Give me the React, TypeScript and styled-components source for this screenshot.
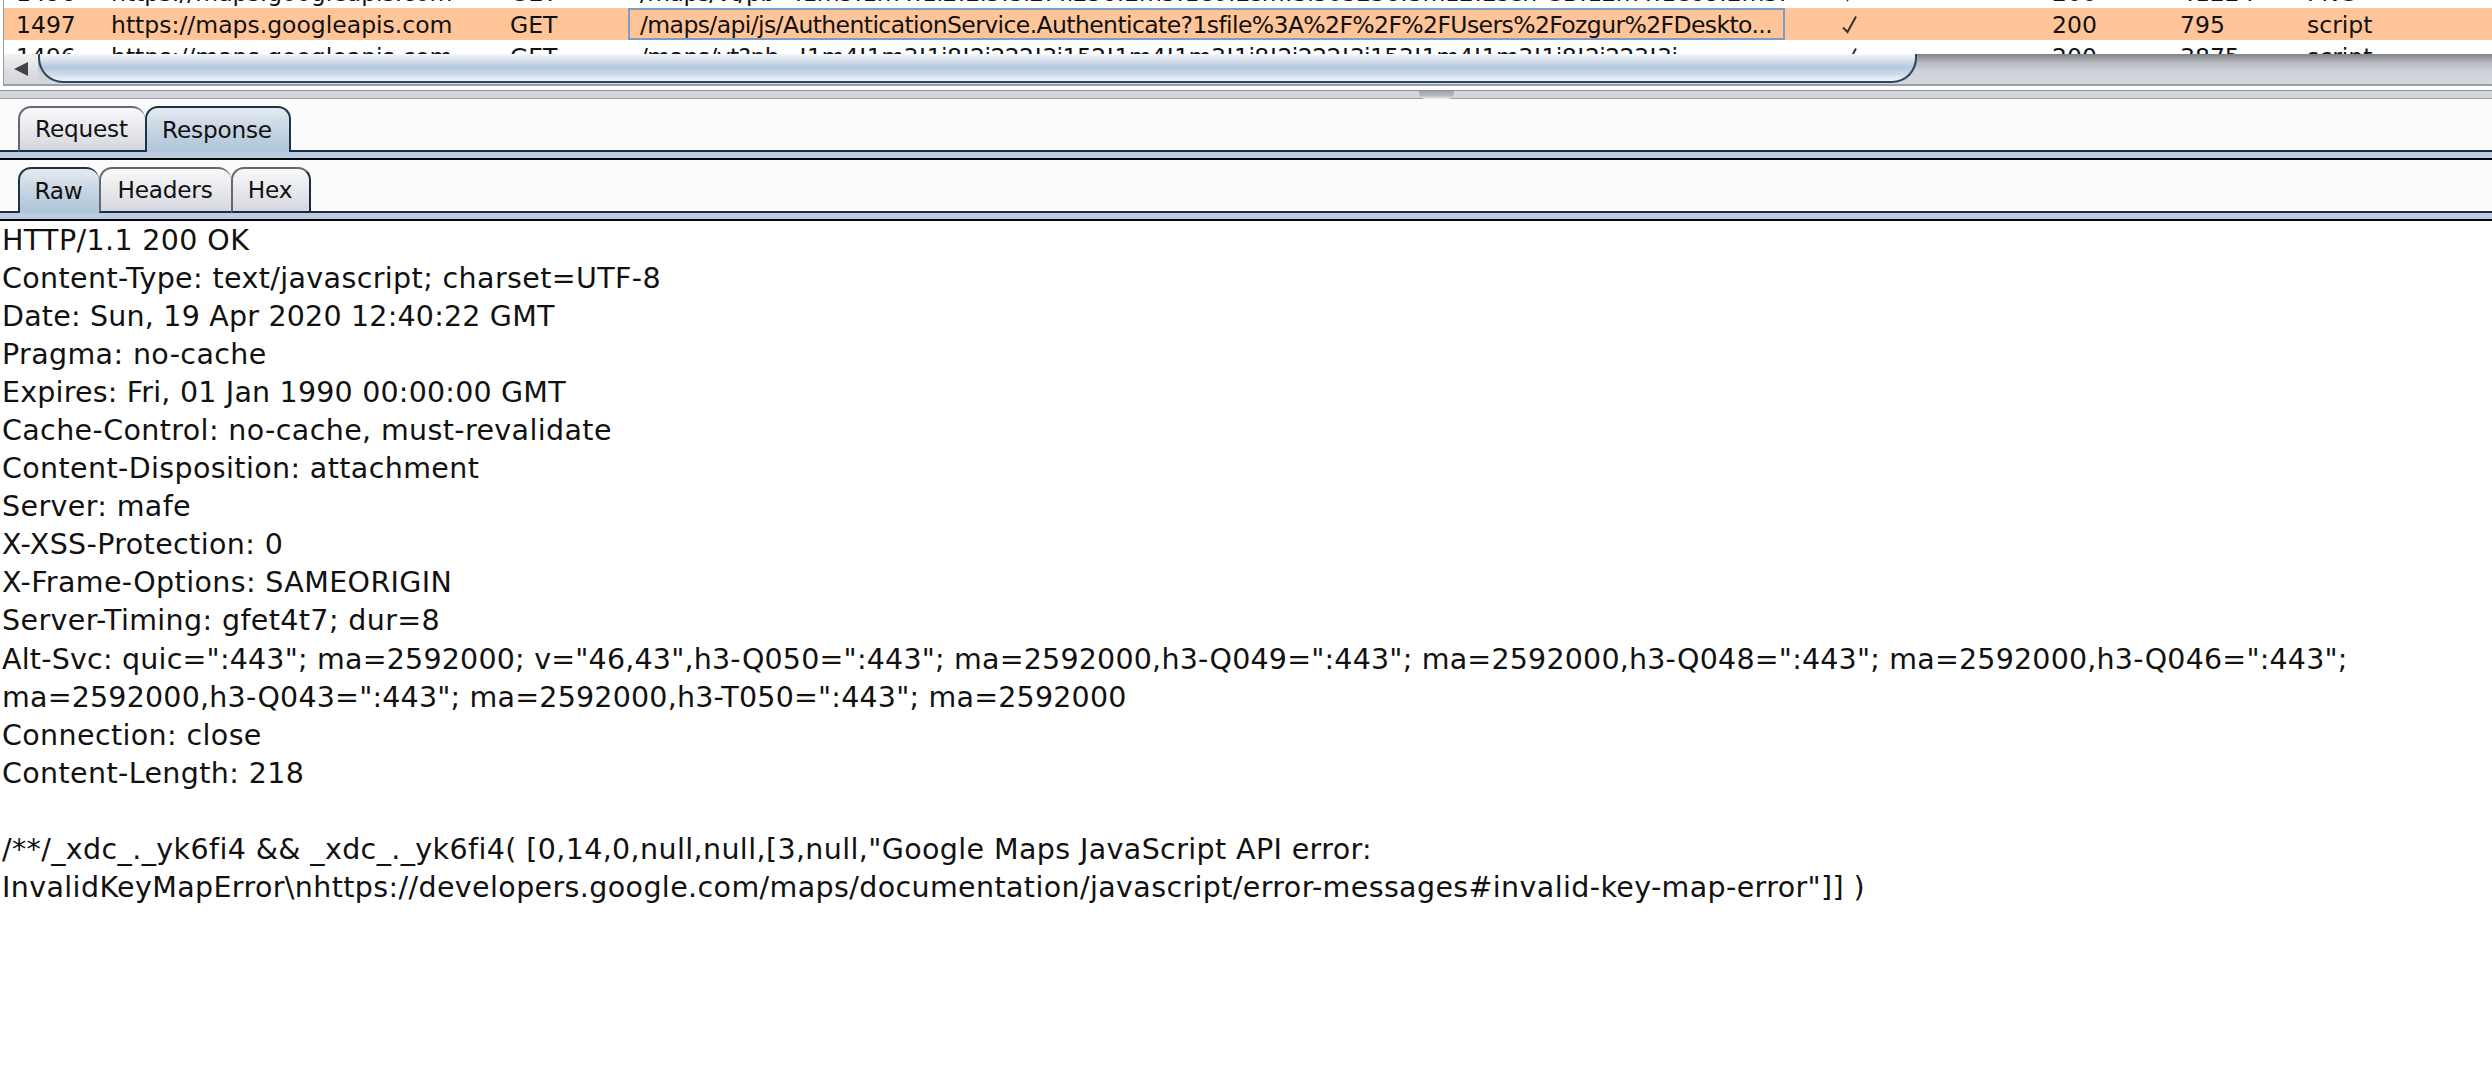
import React from 'react';
import styled, { createGlobalStyle } from 'styled-components';

const GlobalStyle = createGlobalStyle`
  html, body {
    margin: 0;
    padding: 0;
    background: #fff;
    overflow: hidden;
  }
  body {
    font-family: "DejaVu Sans", "Liberation Sans", sans-serif;
    color: #000;
  }
`;

const Page = styled.div`
  width: 2492px;
  height: 1086px;
  display: flex;
  flex-direction: column;
  overflow: hidden;
`;

const TablePanel = styled.div`
  margin-left: 3px;
  height: 84px;
  border-left: 1px solid #9a9ea8;
  border-bottom: 2px solid #9a9ea8;
  background: #fff;
  flex: none;
`;

const TableViewport = styled.div`
  height: 54px;
  overflow: hidden;
`;

const Rows = styled.div`
  margin-top: -24px;
`;

const Row = styled.div<{ $selected?: boolean }>`
  display: grid;
  grid-template-columns: 95px 399px 130px 1157px 255px 128px 127px 1fr;
  height: 32px;
  background: ${(p) => (p.$selected ? '#ffc599' : '#fff')};
  font-size: 23.5px;
  line-height: 35px;
`;

const Cell = styled.div`
  padding-left: 12px;
  white-space: nowrap;
  overflow: hidden;
  color: #111;
`;

const PathCell = styled(Cell)<{ $focused?: boolean }>`
  letter-spacing: -0.6px;
  ${(p) => p.$focused && 'box-shadow: inset 0 0 0 2px #7c9ec6;'}
`;

const CheckCell = styled.div`
  padding-left: 57px;
  display: flex;
  align-items: center;
`;

const ScrollBar = styled.div`
  height: 30px;
  display: flex;
  background: linear-gradient(#7f8288 0, #b9bbc1 30%, #d0d2d9 60%, #d5d7de 100%);
`;

const ArrowButton = styled.div`
  width: 34px;
  flex: none;
  display: flex;
  align-items: center;
  padding-left: 10px;
  box-sizing: border-box;
  background: linear-gradient(#f2f2f4 0, #dcdde2 60%, #d3d5dc 100%);
`;

const ArrowLeft = styled.div`
  width: 0;
  height: 0;
  border-top: 7px solid transparent;
  border-bottom: 7px solid transparent;
  border-right: 14px solid #444;
`;

const Thumb = styled.div`
  width: 1879px;
  height: 29px;
  box-sizing: border-box;
  flex: none;
  border: 2px solid #2c4557;
  border-top: none;
  border-radius: 0 0 25px 25px;
  background: linear-gradient(#f6f8fa 0, #dde5ee 18%, #b4c8de 50%, #cddcea 75%, #eef7fc 100%);
`;

const Gap = styled.div`
  height: 4px;
  flex: none;
`;

const Splitter = styled.div`
  height: 7px;
  flex: none;
  display: flex;
  background: #d5d7de;
  border-top: 1px solid #8e8f97;
  border-bottom: 1px solid #9c9da5;
`;

const Grip = styled.div`
  width: 35px;
  height: 8px;
  margin-left: 1419px;
  box-sizing: border-box;
  border-radius: 0 0 6px 6px;
  background: linear-gradient(#9fa3ad 0, #b7bac3 60%, #f4f4f6 100%);
`;

const TabStrip = styled.div`
  height: 51px;
  flex: none;
  display: flex;
  align-items: flex-end;
  padding-left: 18px;
  background: #fbfbfb;
  border-bottom: 2px solid #1b2b44;
`;

const Tab = styled.div<{ $active?: boolean; $w: number }>`
  width: ${(p) => p.$w}px;
  height: 46px;
  margin-bottom: -2px;
  padding: 0 2px 2px 0;
  box-sizing: border-box;
  flex: none;
  display: flex;
  align-items: center;
  justify-content: center;
  font-size: 23.2px;
  letter-spacing: -0.2px;
  color: #111;
  border-radius: 13px 13px 0 0;
  border: 2px solid ${(p) => (p.$active ? '#1f3347' : '#66686e')};
  border-right-width: 0;
  border-bottom: ${(p) => (p.$active ? 'none' : '2px solid #1b2b44')};
  background: ${(p) =>
    p.$active
      ? 'linear-gradient(#e6ebf1 0, #c9d6e4 45%, #adc4da 100%)'
      : 'linear-gradient(#f8f8fa 0, #e8e9ed 50%, #d5d7de 100%)'};
  &:last-child {
    border-right-width: 2px;
    border-right-color: ${(p) => (p.$active ? '#1f3347' : '#1b2b44')};
  }
`;

const Band = styled.div`
  height: 6px;
  flex: none;
  background: #bccde1;
  border-bottom: 2px solid #05070f;
`;

const MessageBody = styled.div`
  padding: 1px 0 0 2px;
  font-size: 28.5px;
  color: #111;
`;

// the digit heavy header lines need less tracking than the rest
const Line = styled.div<{ $tight?: boolean }>`
  height: 38.05px;
  line-height: 38.05px;
  white-space: pre;
  letter-spacing: ${(p) => (p.$tight ? '0.2px' : '0.38px')};
`;

const Check = () => (
  <svg width="16" height="19" viewBox="0 0 16 19" fill="none">
    <path d="M1 12.5 L5.5 17 L14 1.5" stroke="#333" strokeWidth="2" />
  </svg>
);

type LogRow = {
  id: string;
  host: string;
  path: string;
  status: string;
  length: string;
  type: string;
  selected?: boolean;
};

const rows: LogRow[] = [
  {
    id: '1496',
    host: 'https://maps.googleapis.com',
    path: '/maps/vt/pb=!1m5!1m4!1i2!2i3!3i2!4i256!2m3!1e0!2sm!3i505236!3m12!2sen-GB!12m4!1e68!2m3!1e0-csm...',
    status: '200',
    length: '41224',
    type: 'PNG',
  },
  {
    id: '1497',
    host: 'https://maps.googleapis.com',
    path: '/maps/api/js/AuthenticationService.Authenticate?1sfile%3A%2F%2F%2FUsers%2Fozgur%2FDeskto...',
    status: '200',
    length: '795',
    type: 'script',
    selected: true,
  },
  {
    id: '1496',
    host: 'https://maps.googleapis.com',
    path: '/maps/vt?pb=!1m4!1m3!1i8!2i222!3i152!1m4!1m3!1i8!2i222!3i153!1m4!1m3!1i8!2i223!3i',
    status: '200',
    length: '3875',
    type: 'script',
  },
];

const responseLines: { text: string; tight?: boolean }[] = [
  { text: 'HTTP/1.1 200 OK' },
  { text: 'Content-Type: text/javascript; charset=UTF-8' },
  { text: 'Date: Sun, 19 Apr 2020 12:40:22 GMT', tight: true },
  { text: 'Pragma: no-cache' },
  { text: 'Expires: Fri, 01 Jan 1990 00:00:00 GMT', tight: true },
  { text: 'Cache-Control: no-cache, must-revalidate' },
  { text: 'Content-Disposition: attachment' },
  { text: 'Server: mafe' },
  { text: 'X-XSS-Protection: 0' },
  { text: 'X-Frame-Options: SAMEORIGIN' },
  { text: 'Server-Timing: gfet4t7; dur=8' },
  {
    text: 'Alt-Svc: quic=":443"; ma=2592000; v="46,43",h3-Q050=":443"; ma=2592000,h3-Q049=":443"; ma=2592000,h3-Q048=":443"; ma=2592000,h3-Q046=":443";',
    tight: true,
  },
  { text: 'ma=2592000,h3-Q043=":443"; ma=2592000,h3-T050=":443"; ma=2592000', tight: true },
  { text: 'Connection: close' },
  { text: 'Content-Length: 218' },
  { text: '' },
  { text: '/**/_xdc_._yk6fi4 && _xdc_._yk6fi4( [0,14,0,null,null,[3,null,"Google Maps JavaScript API error:' },
  {
    text: 'InvalidKeyMapError\\nhttps://developers.google.com/maps/documentation/javascript/error-messages#invalid-key-map-error"]] )',
  },
];

export default function App() {
  return (
    <Page>
      <GlobalStyle />
      <TablePanel>
        <TableViewport>
          <Rows>
            {rows.map((r, i) => (
              <Row key={i} $selected={r.selected}>
                <Cell>{r.id}</Cell>
                <Cell>{r.host}</Cell>
                <Cell>GET</Cell>
                <PathCell $focused={r.selected}>{r.path}</PathCell>
                <CheckCell>
                  <Check />
                </CheckCell>
                <Cell>{r.status}</Cell>
                <Cell>{r.length}</Cell>
                <Cell>{r.type}</Cell>
              </Row>
            ))}
          </Rows>
        </TableViewport>
        <ScrollBar>
          <ArrowButton>
            <ArrowLeft />
          </ArrowButton>
          <Thumb />
        </ScrollBar>
      </TablePanel>
      <Gap />
      <Splitter>
        <Grip />
      </Splitter>
      <TabStrip>
        <Tab $w={127}>Request</Tab>
        <Tab $w={146} $active>
          Response
        </Tab>
      </TabStrip>
      <Band />
      <TabStrip>
        <Tab $w={81} $active>
          Raw
        </Tab>
        <Tab $w={132}>Headers</Tab>
        <Tab $w={80}>Hex</Tab>
      </TabStrip>
      <Band />
      <MessageBody>
        {responseLines.map((l, i) => (
          <Line key={i} $tight={l.tight}>
            {l.text}
          </Line>
        ))}
      </MessageBody>
    </Page>
  );
}
